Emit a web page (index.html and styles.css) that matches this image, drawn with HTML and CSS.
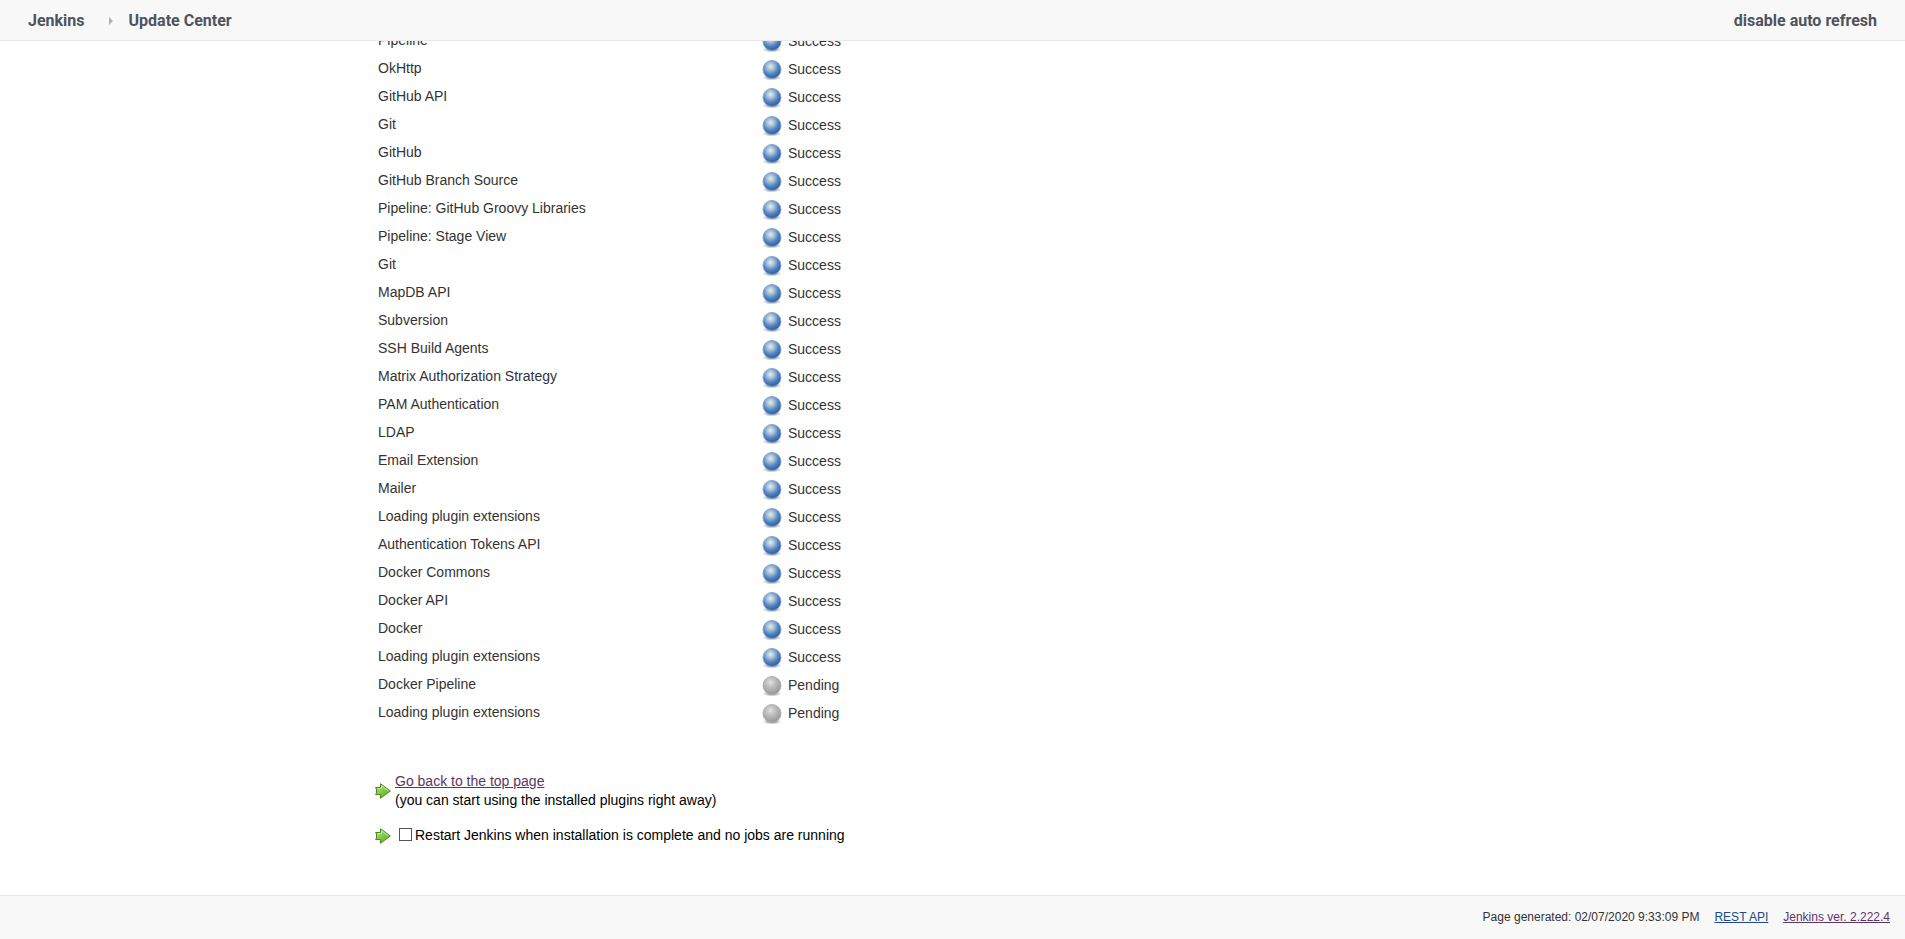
FILE: index.html
```
<!DOCTYPE html>
<html lang="en">
<head>
<meta charset="utf-8">
<title>Update Center [Jenkins]</title>
<link rel="stylesheet" href="styles.css">
</head>
<body>
<svg class="defs" aria-hidden="true">
  <defs>
    <radialGradient id="blue-fill" cx="0.42" cy="0.33" r="0.65">
      <stop offset="0" stop-color="#e8ecdf"/>
      <stop offset="0.3" stop-color="#a9c3dc"/>
      <stop offset="0.65" stop-color="#5486bf"/>
      <stop offset="1" stop-color="#2a5fa5"/>
    </radialGradient>
    <radialGradient id="grey-fill" cx="0.42" cy="0.33" r="0.65">
      <stop offset="0" stop-color="#e2e2e2"/>
      <stop offset="0.4" stop-color="#bfbfbf"/>
      <stop offset="1" stop-color="#999999"/>
    </radialGradient>
    <radialGradient id="shade">
      <stop offset="0" stop-color="#000" stop-opacity="0.55"/>
      <stop offset="1" stop-color="#000" stop-opacity="0"/>
    </radialGradient>
    <linearGradient id="green-fill" x1="0" y1="0" x2="1" y2="1">
      <stop offset="0" stop-color="#c0e39b"/>
      <stop offset="0.5" stop-color="#80c846"/>
      <stop offset="1" stop-color="#56a51c"/>
    </linearGradient>
    <symbol id="ball-blue" viewBox="0 0 24 24">
      <ellipse cx="12" cy="19.5" rx="9.5" ry="3" fill="url(#shade)"/>
      <circle cx="12" cy="11.5" r="9" fill="url(#blue-fill)" stroke="#7f9fc8" stroke-width="0.9"/>
    </symbol>
    <symbol id="ball-grey" viewBox="0 0 24 24">
      <ellipse cx="12" cy="19.5" rx="9.5" ry="3" fill="url(#shade)"/>
      <circle cx="12" cy="11.5" r="9" fill="url(#grey-fill)" stroke="#adadad" stroke-width="0.9"/>
    </symbol>
    <symbol id="arrow" viewBox="0 0 16 16">
      <path d="M0.5 4.5H5.5V0.7L15.4 8L5.5 15.3V11.5H0.5L1.5 10V6Z" fill="url(#green-fill)" stroke="#4a8a1c" stroke-linejoin="round"/>
      <path d="M2.5 5.5H6.5V2.7L13.6 8" fill="none" stroke="#cfebb2" stroke-width="0.9"/>
    </symbol>
  </defs>
</svg>
<header class="topbar">
  <nav class="crumbs">
    <a class="crumb" href="#">Jenkins</a>
    <svg class="chevron" viewBox="0 0 4 8" aria-hidden="true"><path d="M0 0L4 4L0 8Z"/></svg>
    <a class="crumb" href="#">Update Center</a>
  </nav>
  <a class="crumb" href="#">disable auto refresh</a>
</header>
<main class="main">
  <table class="jobs">
    <tbody>
      <tr><td class="name">Pipeline</td><td><span class="status"><svg class="ball"><use href="#ball-blue"/></svg>Success</span></td></tr>
      <tr><td class="name">OkHttp</td><td><span class="status"><svg class="ball"><use href="#ball-blue"/></svg>Success</span></td></tr>
      <tr><td class="name">GitHub API</td><td><span class="status"><svg class="ball"><use href="#ball-blue"/></svg>Success</span></td></tr>
      <tr><td class="name">Git</td><td><span class="status"><svg class="ball"><use href="#ball-blue"/></svg>Success</span></td></tr>
      <tr><td class="name">GitHub</td><td><span class="status"><svg class="ball"><use href="#ball-blue"/></svg>Success</span></td></tr>
      <tr><td class="name">GitHub Branch Source</td><td><span class="status"><svg class="ball"><use href="#ball-blue"/></svg>Success</span></td></tr>
      <tr><td class="name">Pipeline: GitHub Groovy Libraries</td><td><span class="status"><svg class="ball"><use href="#ball-blue"/></svg>Success</span></td></tr>
      <tr><td class="name">Pipeline: Stage View</td><td><span class="status"><svg class="ball"><use href="#ball-blue"/></svg>Success</span></td></tr>
      <tr><td class="name">Git</td><td><span class="status"><svg class="ball"><use href="#ball-blue"/></svg>Success</span></td></tr>
      <tr><td class="name">MapDB API</td><td><span class="status"><svg class="ball"><use href="#ball-blue"/></svg>Success</span></td></tr>
      <tr><td class="name">Subversion</td><td><span class="status"><svg class="ball"><use href="#ball-blue"/></svg>Success</span></td></tr>
      <tr><td class="name">SSH Build Agents</td><td><span class="status"><svg class="ball"><use href="#ball-blue"/></svg>Success</span></td></tr>
      <tr><td class="name">Matrix Authorization Strategy</td><td><span class="status"><svg class="ball"><use href="#ball-blue"/></svg>Success</span></td></tr>
      <tr><td class="name">PAM Authentication</td><td><span class="status"><svg class="ball"><use href="#ball-blue"/></svg>Success</span></td></tr>
      <tr><td class="name">LDAP</td><td><span class="status"><svg class="ball"><use href="#ball-blue"/></svg>Success</span></td></tr>
      <tr><td class="name">Email Extension</td><td><span class="status"><svg class="ball"><use href="#ball-blue"/></svg>Success</span></td></tr>
      <tr><td class="name">Mailer</td><td><span class="status"><svg class="ball"><use href="#ball-blue"/></svg>Success</span></td></tr>
      <tr><td class="name">Loading plugin extensions</td><td><span class="status"><svg class="ball"><use href="#ball-blue"/></svg>Success</span></td></tr>
      <tr><td class="name">Authentication Tokens API</td><td><span class="status"><svg class="ball"><use href="#ball-blue"/></svg>Success</span></td></tr>
      <tr><td class="name">Docker Commons</td><td><span class="status"><svg class="ball"><use href="#ball-blue"/></svg>Success</span></td></tr>
      <tr><td class="name">Docker API</td><td><span class="status"><svg class="ball"><use href="#ball-blue"/></svg>Success</span></td></tr>
      <tr><td class="name">Docker</td><td><span class="status"><svg class="ball"><use href="#ball-blue"/></svg>Success</span></td></tr>
      <tr><td class="name">Loading plugin extensions</td><td><span class="status"><svg class="ball"><use href="#ball-blue"/></svg>Success</span></td></tr>
      <tr><td class="name">Docker Pipeline</td><td><span class="status"><svg class="ball"><use href="#ball-grey"/></svg>Pending</span></td></tr>
      <tr><td class="name">Loading plugin extensions</td><td><span class="status"><svg class="ball"><use href="#ball-grey"/></svg>Pending</span></td></tr>
    </tbody>
  </table>
  <div class="actions">
    <div class="action">
      <svg class="arrow" aria-hidden="true"><use href="#arrow"/></svg>
      <div><a class="visited" href="#">Go back to the top page</a><br>(you can start using the installed plugins right away)</div>
    </div>
    <div class="action">
      <svg class="arrow" aria-hidden="true"><use href="#arrow"/></svg>
      <input class="check" type="checkbox" id="restart">
      <label for="restart">Restart Jenkins when installation is complete and no jobs are running</label>
    </div>
  </div>
</main>
<footer class="footer">
  <span>Page generated: 02/07/2020 9:33:09 PM</span>
  <a class="link" href="#">REST API</a>
  <a class="visited" href="#">Jenkins ver. 2.222.4</a>
</footer>
</body>
</html>
```
FILE: styles.css
```
* {
  box-sizing: border-box;
}

body {
  margin: 0;
  height: 100vh;
  display: flex;
  flex-direction: column;
  overflow: hidden;
  background: #fff;
  color: #333;
  font: 14px/19px "Liberation Sans", Arial, sans-serif;
}

.defs {
  position: absolute;
  width: 0;
  height: 0;
}

.topbar {
  flex: none;
  display: flex;
  align-items: center;
  justify-content: space-between;
  padding: 11px 28px 9px;
  background: #f8f8f8;
  border-bottom: 1px solid #e8eaea;
}

.crumbs {
  display: flex;
  align-items: center;
}

.crumb {
  color: #4d545d;
  font: bold 16px/20px Roboto, sans-serif;
  text-decoration: none;
}

.chevron {
  width: 4px;
  height: 8px;
  margin: 0 16px 0 24px;
  fill: #b0b2b2;
}

.main {
  flex: 1;
  min-height: 0;
  display: flex;
  flex-direction: column;
  justify-content: flex-end;
  padding: 0 16px 50px 374px;
  overflow: hidden;
}

.jobs {
  align-self: flex-start;
  border-collapse: collapse;
}

.jobs td {
  height: 28px;
  padding: 2px 4px;
  vertical-align: top;
}

.jobs .name {
  width: 382px;
  padding-top: 3px;
}

.status {
  display: flex;
  align-items: flex-start;
  gap: 4px;
  line-height: 22px;
}

.ball {
  width: 24px;
  height: 24px;
}

.actions {
  display: flex;
  flex-direction: column;
  gap: 16px;
  padding-top: 44px;
  color: #000;
}

.action {
  display: flex;
  align-items: center;
}

.arrow {
  flex: none;
  width: 16px;
  height: 16px;
  margin: 0 4px 0 1px;
}

.check {
  appearance: none;
  width: 13px;
  height: 13px;
  margin: 0 3px 2px 4px;
  border: 1px solid #555;
  background: #fff;
}

.check:checked {
  background: #555;
}

.footer {
  flex: none;
  display: flex;
  justify-content: flex-end;
  gap: 15px;
  padding: 12px 15px 13px;
  background: #f8f8f8;
  border-top: 1px solid #e8eaea;
  font-size: 12px;
  line-height: 18px;
}

.link {
  color: #204a87;
}

.visited {
  color: #5c3566;
}
```
